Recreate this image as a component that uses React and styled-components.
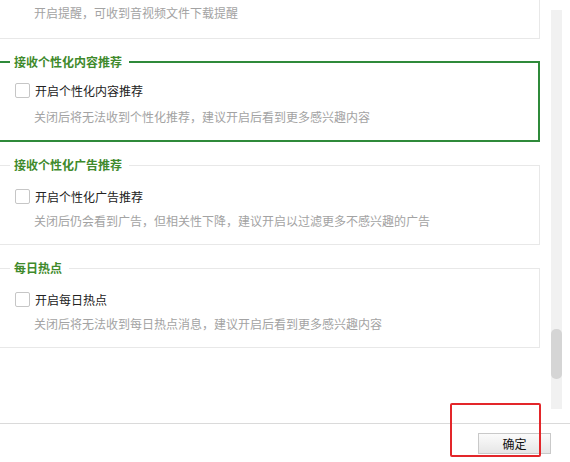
import React from 'react';
import styled, { createGlobalStyle } from 'styled-components';

const GlobalStyle = createGlobalStyle`
  html, body {
    margin: 0;
    padding: 0;
    background: #fff;
  }
  body {
    font-family: "Noto Sans CJK SC", "Noto Sans", sans-serif;
  }
`;

const Window = styled.div`
  position: relative;
  width: 570px;
  height: 462px;
  display: flex;
  flex-direction: column;
  background: #fff;
  overflow: hidden;
`;

const Body = styled.div`
  height: 423px;
  display: flex;
  overflow: hidden;
`;

const List = styled.div`
  width: 540px;
  display: flex;
  flex-direction: column;
  gap: 15px;
`;

const Group = styled.fieldset`
  box-sizing: border-box;
  width: 560px;
  min-width: 0;
  margin: 0 0 0 -20px;
  padding: 0 0 15px 34px;
  border: 1px solid #e8e8e8;
  ${p => p.active && 'border: 2px solid #2f8a3a; padding-left: 33px; padding-bottom: 15px;'}
  ${p => p.partial && 'border-top: none; padding-top: 5px; padding-bottom: 17px;'}
`;

const Legend = styled.legend`
  margin-left: -5px;
  padding: 0 7px 0 4px;
  height: 16px;
  line-height: 16px;
  font-size: 12px;
  font-weight: bold;
  color: #3f8a2c;
`;

const Row = styled.label`
  display: flex;
  align-items: center;
  gap: 5px;
  height: 16px;
  margin-top: ${p => (p.active ? '12px' : '15px')};
  font-size: 12px;
  color: #222;
  cursor: pointer;
`;

const Box = styled.input.attrs({ type: 'checkbox' })`
  appearance: none;
  box-sizing: border-box;
  width: 15px;
  height: 15px;
  margin: 0;
  border: 1px solid #c6c6c6;
  border-radius: 2px;
  background: #fff;
`;

const Desc = styled.div`
  margin: ${p => p.gap}px 0 0 19px;
  height: 16px;
  line-height: 16px;
  font-size: 12px;
  color: #a3a3a3;
  white-space: nowrap;
`;

const Track = styled.div`
  width: 11px;
  height: 399px;
  margin: 10px 0 0 11px;
  background: #f1f1f1;
  display: flex;
  flex-direction: column;
`;

const Thumb = styled.div`
  height: 50px;
  margin-top: ${p => p.offset}px;
  border-radius: 5px;
  background: #d5d5d5;
`;

const Footer = styled.div`
  flex: 1;
  border-top: 1px solid #dadada;
  display: flex;
  justify-content: flex-end;
  align-items: flex-start;
  padding: 9px 19px 0 0;
`;

const Button = styled.button`
  box-sizing: border-box;
  width: 73px;
  height: 21px;
  padding: 0;
  border: 1px solid #c9c9c9;
  background: linear-gradient(#fbfbfb, #e6e6e6);
  font-family: "Noto Sans CJK SC", "Noto Sans", sans-serif;
  font-size: 12px;
  color: #111;
  line-height: 19px;
`;

const Highlight = styled.div`
  position: absolute;
  left: 450px;
  top: 403px;
  width: 91px;
  height: 54px;
  box-sizing: border-box;
  border: 2px solid #e3262a;
  border-radius: 2px;
  pointer-events: none;
`;

const groups = [
  {
    title: '接收个性化内容推荐',
    label: '开启个性化内容推荐',
    desc: '关闭后将无法收到个性化推荐，建议开启后看到更多感兴趣内容',
    active: true,
  },
  {
    title: '接收个性化广告推荐',
    label: '开启个性化广告推荐',
    desc: '关闭后仍会看到广告，但相关性下降，建议开启以过滤更多不感兴趣的广告',
  },
  {
    title: '每日热点',
    label: '开启每日热点',
    desc: '关闭后将无法收到每日热点消息，建议开启后看到更多感兴趣内容',
  },
];

const App = () => {
  return (
    <>
      <GlobalStyle />
      <Window>
        <Body>
          <List>
            {/* group scrolled mostly out of view: only its last line shows */}
            <Group partial>
              <Desc gap={0}>开启提醒，可收到音视频文件下载提醒</Desc>
            </Group>
            {groups.map((g, i) => (
              <Group key={i} active={g.active}>
                <Legend>{g.title}</Legend>
                <Row active={g.active}>
                  <Box />
                  <span>{g.label}</span>
                </Row>
                <Desc gap={g.active ? 11 : 9}>{g.desc}</Desc>
              </Group>
            ))}
          </List>
          <Track>
            <Thumb offset={319} />
          </Track>
        </Body>
        <Footer>
          <Button>确定</Button>
        </Footer>
        <Highlight />
      </Window>
    </>
  );
};

export default App;
